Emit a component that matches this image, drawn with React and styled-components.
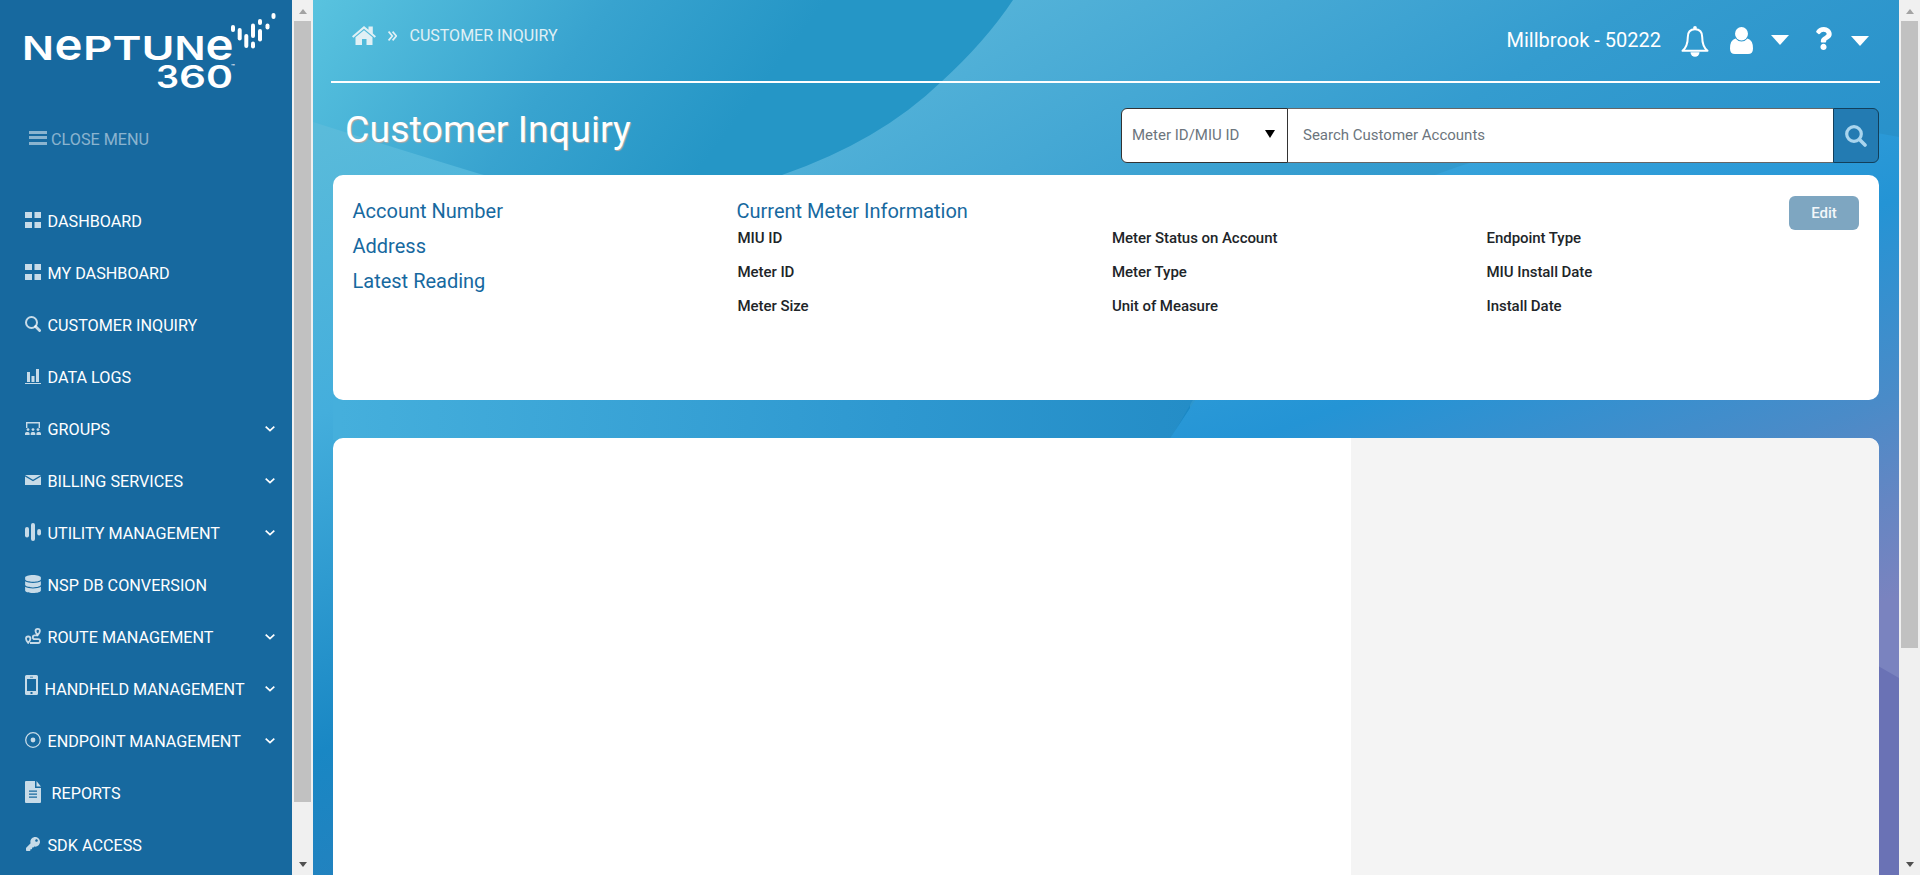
import React from "react";
import styled, { createGlobalStyle, css } from "styled-components";
import { FaDatabase, FaKey, FaQuestion } from "react-icons/fa";

const GlobalStyle = createGlobalStyle`
  * { box-sizing: border-box; }
  body { margin: 0; overflow: hidden; font-family: Roboto, sans-serif; }
  h1, h2, p, ul { margin: 0; padding: 0; font-weight: 400; }
`;

const Page = styled.div`
  display: flex;
  width: 1920px;
  height: 875px;
  overflow: hidden;
`;

const Sidebar = styled.nav`
  width: 292px;
  flex: none;
  background: #17699f;
  color: #fff;
  overflow: hidden;
`;

const Logo = styled.svg`
  display: block;
  width: 292px;
  height: 100px;
`;

const CloseMenu = styled.div`
  display: flex;
  align-items: center;
  gap: 4px;
  height: 40px;
  margin: 19px 0 36px 29px;
  font-size: 16.2px;
  color: rgba(255, 255, 255, 0.5);
`;

const Burger = styled.span`
  width: 18px;
  height: 14px;
  border-top: 3px solid currentColor;
  border-bottom: 3px solid currentColor;
  display: flex;
  align-items: center;
  margin-top: -3px;
  &::before {
    content: "";
    width: 100%;
    height: 3px;
    background: currentColor;
  }
`;

const NavList = styled.ul`
  list-style: none;
`;

const NavItem = styled.li`
  display: flex;
  align-items: center;
  height: 52px;
  padding: 0 17px 0 25px;
  font-size: 16.2px;
  white-space: nowrap;
`;

const NavIcon = styled.span`
  display: flex;
  justify-content: center;
  width: ${(p) => p.$width || 16}px;
  margin-right: ${(p) => p.$gap || 6.5}px;
  margin-bottom: ${(p) => p.$lift || 2}px;
  color: rgba(255, 255, 255, 0.76);
  svg { display: block; }
`;

const NavLabel = styled.span`
  flex: 1;
  padding-top: 1px;
`;

const ScrollTrack = styled.div`
  display: flex;
  flex-direction: column;
  align-items: center;
  justify-content: space-between;
  flex: none;
  width: 21px;
  height: 875px;
  background: #f0f0f0;
`;

const ScrollThumb = styled.div`
  width: 17px;
  height: ${(p) => p.$height}px;
  margin-bottom: auto;
  background: #c1c1c1;
`;

const ScrollArrow = styled.div`
  display: flex;
  align-items: center;
  justify-content: center;
  height: 21px;
  &::before {
    content: "";
    border: 4.5px solid transparent;
    ${(p) =>
      p.$down
        ? css`border-top: 5px solid #505050; border-bottom: 0;`
        : css`border-bottom: 5px solid #a3a3a3; border-top: 0; margin-top: 2px;`}
  }
`;

const Main = styled.main`
  position: relative;
  flex: 1;
  height: 875px;
  overflow: hidden;
`;

const Backdrop = styled.svg`
  position: absolute;
  inset: 0;
`;

const Content = styled.div`
  position: relative;
  width: 1586px;
  padding: 0 19px 0 18px;
`;

const Header = styled.header`
  display: flex;
  justify-content: space-between;
  align-items: flex-start;
  height: 83px;
  border-bottom: 2px solid #fff;
  color: #fff;
`;

const Breadcrumb = styled.div`
  display: flex;
  align-items: center;
  height: 70px;
  padding-left: 20.5px;
  font-size: 16px;
  color: #e0f0f5;
`;

const HomeIcon = styled.svg`
  margin-right: 12px;
`;

const CrumbArrow = styled.svg`
  margin: 2px 13px 0 0;
`;

const Account = styled.div`
  display: flex;
  align-items: center;
  height: 80px;
  padding-right: 11px;
  font-size: 20px;
  svg { display: block; flex: none; }
`;

const BellIcon = styled.svg`
  margin: 3px 21px 0 20px;
`;

const UserIcon = styled.svg`
  margin-right: 18px;
`;

const Caret = styled.span`
  width: 18px;
  border: 9px solid transparent;
  border-top: 10px solid #fff;
  border-bottom: 0;
  margin-top: ${(p) => p.$drop || 0}px;
  margin-right: ${(p) => p.$gap || 0}px;
`;

const Help = styled.span`
  display: flex;
  margin: -4px 19px 0 0;
`;

const TitleRow = styled.div`
  display: flex;
  justify-content: space-between;
  height: 92px;
  padding: 25px 1px 0 14px;
`;

const Title = styled.h1`
  font-size: 37.6px;
  line-height: 43px;
  color: #fff;
  text-shadow: 1px 1px 1px #b3a9a6;
`;

const SearchBar = styled.div`
  display: flex;
  width: 758px;
  height: 55px;
  font-size: 15px;
  color: #6c757d;
`;

const SearchType = styled.div`
  display: flex;
  align-items: center;
  justify-content: space-between;
  width: 167px;
  padding: 0 12px 1px 10px;
  background: #fff;
  border: 1px solid #333;
  border-radius: 6px 0 0 6px;
  &::after {
    content: "";
    border: 5px solid transparent;
    border-top: 8px solid #000;
    border-bottom: 0;
    margin-top: -2px;
  }
`;

const SearchField = styled.div`
  display: flex;
  align-items: center;
  flex: 1;
  padding: 0 0 1px 15px;
  background: #fff;
  border: solid #666;
  border-width: 1px 0;
`;

const SearchButton = styled.div`
  display: flex;
  align-items: center;
  justify-content: center;
  width: 46px;
  background: #237bb2;
  border: 1px solid #123f5b;
  border-radius: 0 6px 6px 0;
`;

const InfoCard = styled.section`
  display: flex;
  width: 1546px;
  height: 225px;
  margin: 0 0 38px 2px;
  padding: 18px 20px 0 19.5px;
  background: #fff;
  border-radius: 10px;
`;

const AccountColumn = styled.div`
  width: 384px;
  padding-top: 1px;
`;

const BlueHeading = styled.h2`
  height: 35px;
  line-height: 35px;
  font-size: 20px;
  color: #17699f;
`;

const MeterColumn = styled.div`
  flex: 1;
  padding-top: 1px;
`;

const MeterHeading = styled(BlueHeading)`
  height: 27px;
`;

const MeterGrid = styled.div`
  display: grid;
  grid-template-columns: 374.5px 374.5px auto;
  grid-auto-rows: 34px;
  padding-left: 1px;
`;

const MeterLabel = styled.p`
  line-height: 34px;
  font-size: 15px;
  font-weight: 500;
  letter-spacing: -0.05px;
  color: #212529;
`;

const EditButton = styled.div`
  display: flex;
  align-items: center;
  justify-content: center;
  width: 70px;
  height: 34px;
  margin-top: 3px;
  margin-left: -70px;
  font-size: 15px;
  font-weight: 500;
  color: #f3f7fa;
  background: #7ea6c1;
  border-radius: 6px;
`;

const DetailCard = styled.section`
  display: flex;
  justify-content: flex-end;
  width: 1546px;
  height: 460px;
  margin-left: 2px;
  background: #fff;
  border-radius: 10px 10px 0 0;
  overflow: hidden;
`;

const DetailAside = styled.aside`
  width: 528px;
  background: #f4f4f4;
`;

const GridIcon = () => (
  <svg width="16" height="16" fill="currentColor">
    <path d="M0 0h7v6H0zM9.500 0H16v6H9.500zM0 10h7v6H0zM9.500 10H16v6H9.500z" />
  </svg>
);

const MagnifierIcon = () => (
  <svg width="16" height="16" fill="none" stroke="currentColor">
    <circle cx="6.5" cy="6.5" r="5.5" strokeWidth="2" />
    <path d="M10.6 10.6 14.6 14.6" strokeWidth="2.8" strokeLinecap="round" />
  </svg>
);

const ChartIcon = () => (
  <svg width="16" height="15" fill="currentColor">
    <path d="M2 3h3v10H2zM6.5 7h3v6h-3zM11 0h3v13h-3zM0 14h16v1H0z" />
  </svg>
);

const GroupIcon = () => (
  <svg width="16" height="13" fill="currentColor">
    <path d="M1 0h14v6h-1.4V1.4H2.4V6H1z" />
    <circle cx="3" cy="7.6" r="1.4" />
    <circle cx="8" cy="7.6" r="1.4" />
    <circle cx="13" cy="7.6" r="1.4" />
    <path d="M0 13v-1.5q0-1.6 1.600-1.600h1.400q1.600 0 1.600 1.600V13zM5.700 13v-1.5q0-1.6 1.600-1.600h1.400q1.600 0 1.600 1.600V13zM11.400 13v-1.5q0-1.6 1.600-1.600h1.400q1.600 0 1.600 1.600V13z" />
  </svg>
);

const MailIcon = () => (
  <svg width="16" height="10" fill="currentColor">
    <path d="M0 0h16L8 4.7zM0 1.4 8 6.2l8-4.8V10H0z" />
  </svg>
);

const BarsIcon = () => (
  <svg width="16" height="18" fill="currentColor">
    <rect x="0" y="4" width="4" height="10.5" rx="2" />
    <rect x="6" y="0" width="4" height="18" rx="2" />
    <rect x="12.2" y="6" width="3.8" height="6.5" rx="1.9" />
  </svg>
);

const RouteIcon = () => (
  <svg width="16" height="16" fill="none" stroke="currentColor" strokeWidth="1.8">
    <path d="M12.700 7.200Q10.500 4.600 10.500 3.100a2.200 2.200 0 0 1 4.400 0Q14.900 4.600 12.700 7.200z" />
    <path d="M3.200 14.800Q1 12.200 1 10.700a2.200 2.200 0 0 1 4.400 0Q5.400 12.200 3.200 14.800z" />
    <path d="M12.700 7.400H9.700a1.900 1.900 0 0 0 0 3.800h3.500a1.900 1.900 0 0 1 0 3.800H5" />
  </svg>
);

const PhoneIcon = () => (
  <svg width="13" height="20" fill="currentColor" fillRule="evenodd">
    <path d="M1.5 0h10A1.5 1.5 0 0 1 13 1.500v17a1.500 1.500 0 0 1-1.500 1.500h-10A1.500 1.500 0 0 1 0 18.500v-17A1.500 1.500 0 0 1 1.500 0zM2 4v12h9V4zM5 1.800v.800h3v-.800zM5.500 17v2h2v-2z" />
  </svg>
);

const TargetIcon = () => (
  <svg width="16" height="16">
    <circle cx="8" cy="8" r="7.3" fill="none" stroke="currentColor" strokeWidth="1.3" />
    <circle cx="8" cy="8" r="2.4" fill="currentColor" />
  </svg>
);

const ReportIcon = () => (
  <svg width="16" height="22" fill="currentColor" fillRule="evenodd">
    <path d="M0 1a1 1 0 0 1 1-1h9v7h6v14a1 1 0 0 1-1 1H1a1 1 0 0 1-1-1zM4 9.500v1.200h8V9.500zM4 12.500v1.200h8v-1.200zM4 15.500v1.200h8v-1.200z" />
    <path d="M11.500 0 16 5.600h-4.500z" />
  </svg>
);

const Chevron = () => (
  <svg width="10" height="6" fill="none" stroke="#fff" strokeWidth="1.7">
    <path d="M.7.700 5 4.700 9.300.700" />
  </svg>
);

const navItems = [
  { label: "DASHBOARD", icon: <GridIcon /> },
  { label: "MY DASHBOARD", icon: <GridIcon /> },
  { label: "CUSTOMER INQUIRY", icon: <MagnifierIcon /> },
  { label: "DATA LOGS", icon: <ChartIcon /> },
  { label: "GROUPS", icon: <GroupIcon />, open: true },
  { label: "BILLING SERVICES", icon: <MailIcon />, open: true },
  { label: "UTILITY MANAGEMENT", icon: <BarsIcon />, open: true },
  { label: "NSP DB CONVERSION", icon: <FaDatabase size={18} /> },
  { label: "ROUTE MANAGEMENT", icon: <RouteIcon />, open: true },
  { label: "HANDHELD MANAGEMENT", icon: <PhoneIcon />, open: true, width: 13, lift: 8 },
  { label: "ENDPOINT MANAGEMENT", icon: <TargetIcon />, open: true },
  { label: "REPORTS", icon: <ReportIcon />, gap: 10.5 },
  { label: "SDK ACCESS", icon: <FaKey size={14} /> },
];

const meterLabels = [
  "MIU ID", "Meter Status on Account", "Endpoint Type",
  "Meter ID", "Meter Type", "MIU Install Date",
  "Meter Size", "Unit of Measure", "Install Date",
];

/* [character, left edge, width, font size] */
const wordmark = [
  ["N", 22, 32, 33], ["e", 54.5, 28, 43], ["P", 83, 29.5, 33], ["T", 112.500, 29, 33],
  ["U", 141.500, 33, 33], ["N", 174.500, 31, 33], ["e", 205.500, 28, 43],
];
const numerals = [["3", 156, 23], ["6", 179, 27], ["0", 206, 27]];

/* [center x, top, bottom] */
const logoBars = [
  [233, 25, 32], [239.7, 28, 40.5], [246.3, 34, 48], [253, 23.5, 38],
  [253, 41.5, 48.5], [260, 19, 25], [260, 29, 41.5], [267.500, 23.5, 29.5], [273.5, 13, 19],
];

const BrandLogo = () => (
  <Logo viewBox="0 0 292 100" fill="#fff" fontFamily="Inter, sans-serif" fontWeight="600">
    {wordmark.map(([c, x, w, s], i) => (
      <text key={i} x={x} y="60" fontSize={s} textLength={w} lengthAdjust="spacingAndGlyphs">{c}</text>
    ))}
    {numerals.map(([c, x, w]) => (
      <text key={c} x={x} y="87.5" fontSize="31" fontWeight="600" textLength={w} lengthAdjust="spacingAndGlyphs">{c}</text>
    ))}
    <text x="231" y="69" fontSize="6">™</text>
    {logoBars.map(([x, top, bottom], i) => (
      <rect key={i} x={x - 2} y={top} width="4" height={bottom - top} rx="2" />
    ))}
  </Logo>
);

const Waves = () => (
  <Backdrop width="1586" height="875" viewBox="313 0 1586 875">
    <defs>
      <linearGradient id="left" gradientUnits="userSpaceOnUse" x1="320" y1="130" x2="620" y2="900">
        <stop offset="0" stopColor="#5abbda" />
        <stop offset=".32" stopColor="#44aedc" />
        <stop offset=".7" stopColor="#1987c4" />
        <stop offset="1" stopColor="#2a7dba" />
      </linearGradient>
      <linearGradient id="band" gradientUnits="userSpaceOnUse" x1="340" y1="400" x2="1190" y2="440">
        <stop offset="0" stopColor="#45afdc" />
        <stop offset=".65" stopColor="#2e98d0" />
        <stop offset="1" stopColor="#248dc7" />
      </linearGradient>
      <linearGradient id="top" gradientUnits="userSpaceOnUse" x1="313" y1="0" x2="700" y2="290">
        <stop offset="0" stopColor="#59c3df" />
        <stop offset=".5" stopColor="#38a3cf" />
        <stop offset=".85" stopColor="#2596c6" />
        <stop offset="1" stopColor="#2596c6" />
      </linearGradient>
      <linearGradient id="center" gradientUnits="userSpaceOnUse" x1="950" y1="0" x2="1300" y2="600">
        <stop offset="0" stopColor="#56b4d9" />
        <stop offset=".5" stopColor="#349ccf" />
        <stop offset="1" stopColor="#248dc9" />
      </linearGradient>
      <linearGradient id="right" gradientUnits="userSpaceOnUse" x1="1435" y1="175" x2="1630" y2="697">
        <stop offset="0" stopColor="#36a2da" />
        <stop offset=".33" stopColor="#2494d5" />
        <stop offset=".66" stopColor="#4a8bc8" />
        <stop offset=".83" stopColor="#6486c3" />
        <stop offset="1" stopColor="#7a83bf" />
      </linearGradient>
    </defs>
    <path d="M313 0h1586v875H313z" fill="url(#center)" />
    <path d="M313 110H700V300H1190V450H700V875H313z" fill="url(#left)" />
    <path d="M333 300H1250L1170 440H333z" fill="url(#band)" />
    <path d="M313 0H1013Q985 42 941 82Q880 141 782 175Q640 215 480 174Q385 145 313 122z" fill="url(#top)" />
    <path d="M1169 440L1196 399Q1270 250 1435 175Q1660 90 1899 137V875H1169z" fill="url(#right)" />
    <path d="M1800 620 1879 666.500 1899 678V875H1800z" fill="#6a72b5" />
  </Backdrop>
);

const Scrollbar = ({ thumb }) => (
  <ScrollTrack>
    <ScrollArrow />
    <ScrollThumb $height={thumb} />
    <ScrollArrow $down />
  </ScrollTrack>
);

export default function App() {
  return (
    <Page>
      <GlobalStyle />
      <Sidebar>
        <BrandLogo />
        <CloseMenu><Burger />CLOSE MENU</CloseMenu>
        <NavList>
          {navItems.map((item) => (
            <NavItem key={item.label}>
              <NavIcon $width={item.width} $gap={item.gap} $lift={item.lift}>{item.icon}</NavIcon>
              <NavLabel>{item.label}</NavLabel>
              {item.open && <Chevron />}
            </NavItem>
          ))}
        </NavList>
      </Sidebar>
      <Scrollbar thumb={781} />
      <Main>
        <Waves />
        <Content>
          <Header>
            <Breadcrumb>
              <HomeIcon width="24" height="19" fill="currentColor">
                <path d="M12 0 16.500 3.800V.400h4.300v7.100L24 10.200l-1.300 1.500L12 2.800 1.300 11.700 0 10.200z" />
                <path d="M12 4.200 20.500 11.300V19h-6v-6h-4.500v6H3.500v-7.700z" />
              </HomeIcon>
              <CrumbArrow width="9" height="10" fill="none" stroke="currentColor" strokeWidth="1.7">
                <path d="M.6.600 4.300 5 .6 9.400M4.600.600 8.300 5 4.600 9.400" />
              </CrumbArrow>
              CUSTOMER INQUIRY
            </Breadcrumb>
            <Account>
              Millbrook - 50222
              <BellIcon width="28" height="31">
                <path d="M14 3.200C8.600 3.200 6.800 7 6.800 11C6.800 17.500 5.500 21.500 1.500 24.800H26.500C22.500 21.500 21.200 17.500 21.200 11C21.200 7 19.400 3.200 14 3.200z" fill="none" stroke="#fff" strokeWidth="2" strokeLinejoin="round" />
                <circle cx="14" cy="2" r="1.900" fill="#fff" />
                <path d="M9.500 26.300h9a4.500 4.400 0 0 1-9 0z" fill="#fff" />
              </BellIcon>
              <UserIcon width="23" height="27" fill="#fff">
                <ellipse cx="11.500" cy="6.800" rx="6.500" ry="6.800" />
                <path d="M5.500 11.500Q8 14.600 11.500 14.600T17.500 11.500Q23 13 23 21.500Q23 27 18 27H5Q0 27 0 21.500Q0 13 5.500 11.500z" />
              </UserIcon>
              <Caret $gap={26} />
              <Help>
                <svg width="17" height="23" viewBox="0 0 384 512" preserveAspectRatio="none"><FaQuestion size="100%" /></svg>
              </Help>
              <Caret $drop={2} />
            </Account>
          </Header>
          <TitleRow>
            <Title>Customer Inquiry</Title>
            <SearchBar>
              <SearchType>Meter ID/MIU ID</SearchType>
              <SearchField>Search Customer Accounts</SearchField>
              <SearchButton>
                <svg width="22" height="22" fill="none" stroke="#a9d5ee">
                  <circle cx="9" cy="9" r="7.300" strokeWidth="3.200" />
                  <path d="M14.500 14.500 20 20" strokeWidth="3.600" strokeLinecap="round" />
                </svg>
              </SearchButton>
            </SearchBar>
          </TitleRow>
          <InfoCard>
            <AccountColumn>
              <BlueHeading>Account Number</BlueHeading>
              <BlueHeading>Address</BlueHeading>
              <BlueHeading>Latest Reading</BlueHeading>
            </AccountColumn>
            <MeterColumn>
              <MeterHeading>Current Meter Information</MeterHeading>
              <MeterGrid>
                {meterLabels.map((label) => <MeterLabel key={label}>{label}</MeterLabel>)}
              </MeterGrid>
            </MeterColumn>
            <EditButton>Edit</EditButton>
          </InfoCard>
          <DetailCard>
            <DetailAside />
          </DetailCard>
        </Content>
      </Main>
      <Scrollbar thumb={627} />
    </Page>
  );
}
